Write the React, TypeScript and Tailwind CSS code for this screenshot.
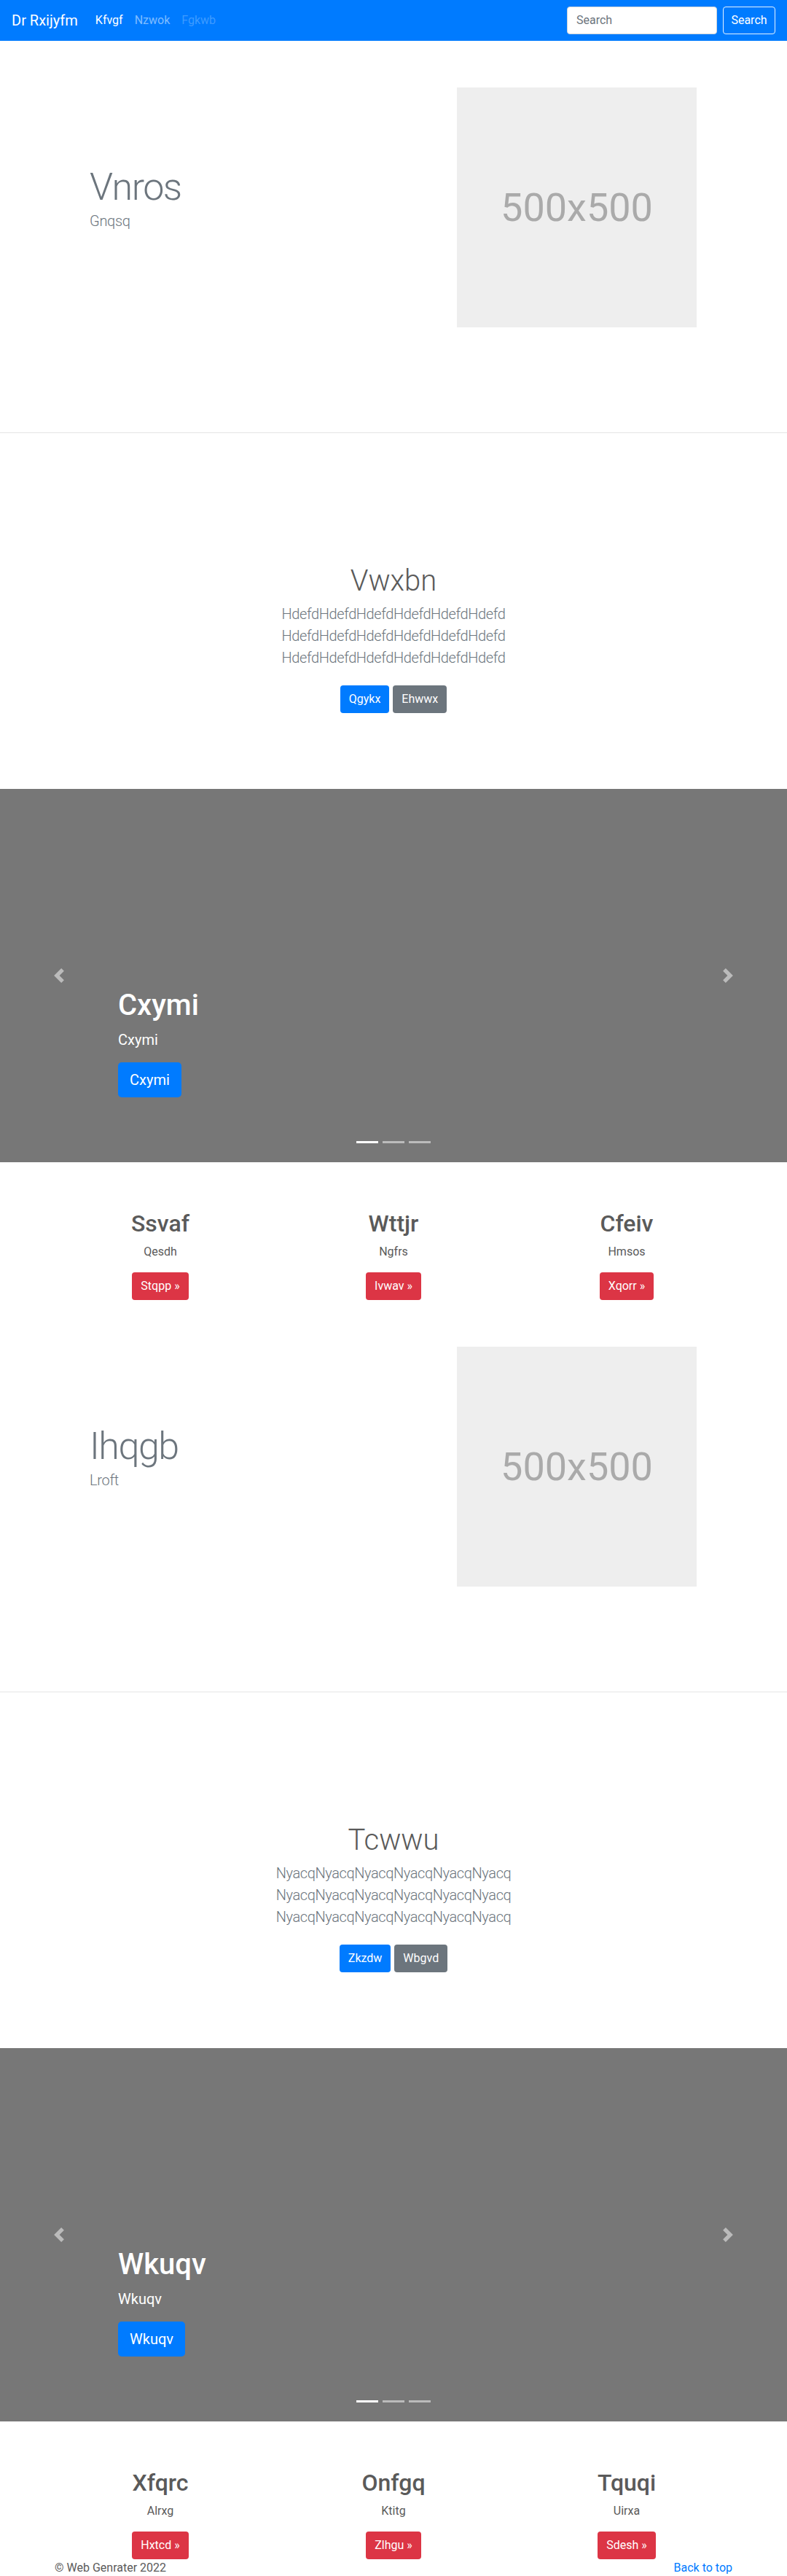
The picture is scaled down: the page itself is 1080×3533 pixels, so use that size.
import React from "react";

type Block = {
  fTitle: string;
  fSub: string;
  jTitle: string;
  jWord: string;
  jBtn1: string;
  jBtn2: string;
  car: string;
  cards: [string, string, string][];
};

const blocks: Block[] = [
  {
    fTitle: "Vnros",
    fSub: "Gnqsq",
    jTitle: "Vwxbn",
    jWord: "Hdefd",
    jBtn1: "Qgykx",
    jBtn2: "Ehwwx",
    car: "Cxymi",
    cards: [
      ["Ssvaf", "Qesdh", "Stqpp"],
      ["Wttjr", "Ngfrs", "Ivwav"],
      ["Cfeiv", "Hmsos", "Xqorr"],
    ],
  },
  {
    fTitle: "Ihqgb",
    fSub: "Lroft",
    jTitle: "Tcwwu",
    jWord: "Nyacq",
    jBtn1: "Zkzdw",
    jBtn2: "Wbgvd",
    car: "Wkuqv",
    cards: [
      ["Xfqrc", "Alrxg", "Hxtcd"],
      ["Onfgq", "Ktitg", "Zlhgu"],
      ["Tquqi", "Uirxa", "Sdesh"],
    ],
  },
];

function Navbar() {
  return (
    <nav className="h-[56px] bg-[#007bff] flex items-center px-4">
      <span className="text-[20px] leading-[30px] text-white mr-4">Dr Rxijyfm</span>
      <ul className="flex items-center text-[16px] leading-[24px]">
        <li className="px-2 text-white">Kfvgf</li>
        <li className="px-2 text-white/50">Nzwok</li>
        <li className="px-2 text-white/25">Fgkwb</li>
      </ul>
      <div className="ml-auto flex items-center gap-2">
        <div className="w-[206px] h-[38px] bg-white rounded border border-[#ced4da] px-3 flex items-center text-[16px] text-[#6c757d]">
          Search
        </div>
        <div className="w-[72px] h-[38px] rounded border border-white/90 flex items-center justify-center text-[16px] text-white">
          Search
        </div>
      </div>
    </nav>
  );
}

function Featurette({ title, sub }: { title: string; sub: string }) {
  return (
    <section className="h-[538px] border-b border-[#e5e5e5]">
      <div className="mx-auto w-[930px] flex pt-16">
        <div className="w-[480px] pl-12 pt-[106px]">
          <h1 className="text-[52px] leading-[62px] font-light tracking-[-1.5px] text-[#6c757d]">{title}</h1>
          <p className="text-[20px] leading-[30px] font-light text-[#6c757d] tracking-[-0.3px]">{sub}</p>
        </div>
        <div className="ml-[72px] w-[329px] h-[329px] bg-[#eeeeee] flex items-center justify-center">
          <span className="text-[54px] leading-none text-[#aaaaaa]">500x500</span>
        </div>
      </div>
    </section>
  );
}

function Jumbo({ b }: { b: Block }) {
  const line = b.jWord.repeat(6);
  return (
    <section className="h-[488px] pt-[179px] text-center">
      <h1 className="text-[40px] leading-[48px] font-light text-[#5a5a5a] mb-[6px]">{b.jTitle}</h1>
      <p className="text-[20px] leading-[30px] font-light text-[#6c757d] tracking-[-0.4px]">
        {line}
        <br />
        {line}
        <br />
        {line}
      </p>
      <div className="mt-[23px] flex justify-center gap-[5px]">
        <span className="h-[38px] px-3 rounded bg-[#007bff] text-white text-[16px] leading-[38px]">{b.jBtn1}</span>
        <span className="h-[38px] px-3 rounded bg-[#6c757d] text-white text-[16px] leading-[38px]">{b.jBtn2}</span>
      </div>
    </section>
  );
}

function Chevron({ dir }: { dir: "l" | "r" }) {
  return (
    <svg width="20" height="20" viewBox="0 0 8 8" fill="#fff" className="opacity-50">
      {dir === "l" ? (
        <path d="M5.25 0l-4 4 4 4 1.5-1.5L4.25 4l2.5-2.5L5.25 0z" />
      ) : (
        <path d="M2.75 0l-1.5 1.5L3.75 4l-2.5 2.5L2.75 8l4-4-4-4z" />
      )}
    </svg>
  );
}

function Carousel({ text }: { text: string }) {
  return (
    <section className="relative h-[512px] bg-[#777777]">
      <div className="absolute left-0 top-0 h-full w-[15%] flex items-center justify-center">
        <Chevron dir="l" />
      </div>
      <div className="absolute right-0 top-0 h-full w-[15%] flex items-center justify-center">
        <Chevron dir="r" />
      </div>
      <div className="absolute left-[15%] top-[273px] text-white">
        <h2 className="text-[40px] leading-[48px] font-medium mb-2">{text}</h2>
        <p className="text-[20px] leading-[30px] mb-4">{text}</p>
        <span className="inline-block h-[48px] px-4 rounded-[5px] bg-[#007bff] text-[20px] leading-[48px]">{text}</span>
      </div>
      <div className="absolute left-0 right-0 bottom-[26px] flex justify-center gap-[6px]">
        <span className="w-[30px] h-[3px] bg-white" />
        <span className="w-[30px] h-[3px] bg-white/50" />
        <span className="w-[30px] h-[3px] bg-white/50" />
      </div>
    </section>
  );
}

function Cards({ cards }: { cards: [string, string, string][] }) {
  return (
    <section className="h-[189px] pt-[65px]">
      <div className="mx-auto w-[960px] grid grid-cols-3">
        {cards.map(([h, p, btn]) => (
          <div key={h} className="text-center">
            <h2 className="text-[32px] leading-[38px] font-medium text-[#5a5a5a] mb-2">{h}</h2>
            <p className="text-[16px] leading-[24px] text-[#5a5a5a] mb-4">{p}</p>
            <span className="inline-block h-[38px] px-3 rounded bg-[#dc3545] text-white text-[16px] leading-[38px]">
              {btn} &raquo;
            </span>
          </div>
        ))}
      </div>
    </section>
  );
}

export default function App() {
  return (
    <div className="font-['Roboto','Liberation_Sans',sans-serif] bg-white text-[#5a5a5a]">
      <Navbar />
      {blocks.map((b) => (
        <div key={b.fTitle}>
          <Featurette title={b.fTitle} sub={b.fSub} />
          <Jumbo b={b} />
          <Carousel text={b.car} />
          <Cards cards={b.cards} />
        </div>
      ))}
      <footer className="mx-auto w-[930px] flex justify-between text-[16px] leading-[23px]">
        <p>&copy; Web Genrater 2022</p>
        <p className="text-[#007bff]">Back to top</p>
      </footer>
    </div>
  );
}
